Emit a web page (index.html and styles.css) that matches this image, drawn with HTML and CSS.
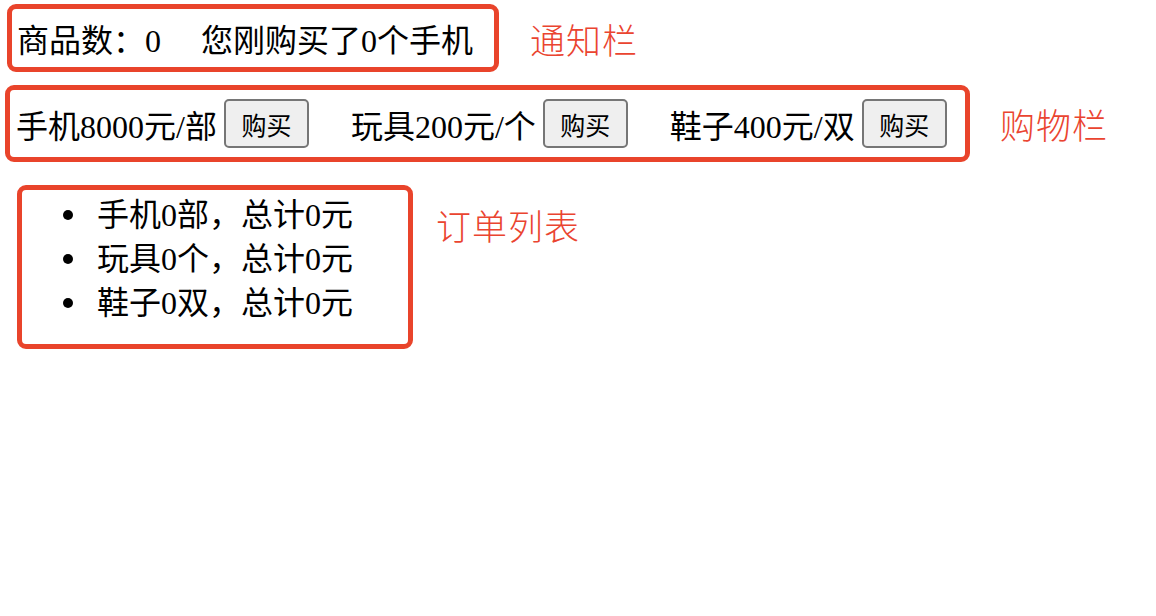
FILE: index.html
```html
<!DOCTYPE html>
<html lang="zh-CN">
<head>
  <meta charset="utf-8" />
  <meta name="viewport" content="width=device-width, initial-scale=1.0" />
  <title>购物车</title>
  <link rel="stylesheet" href="styles.css">
</head>

<body>
  <div class="row row-notice">
    <div class="frame notice">
      <span>商品数：0</span>
      <span class="notice-msg">您刚购买了0个手机</span>
    </div>
    <span class="tag">通知栏</span>
  </div>

  <div class="row row-shop">
    <div class="frame shop">
      <div class="item">
        <span>手机8000元/部</span>
        <button class="buy">购买</button>
      </div>
      <div class="item">
        <span>玩具200元/个</span>
        <button class="buy">购买</button>
      </div>
      <div class="item">
        <span>鞋子400元/双</span>
        <button class="buy">购买</button>
      </div>
    </div>
    <span class="tag">购物栏</span>
  </div>

  <div class="row row-orders">
    <div class="frame orders">
      <ul class="order-list">
        <li>手机0部，总计0元</li>
        <li>玩具0个，总计0元</li>
        <li>鞋子0双，总计0元</li>
      </ul>
    </div>
    <span class="tag">订单列表</span>
  </div>
</body>
</html>
```

FILE: styles.css
```css
body {
  margin: 0;
  font-family: "Liberation Serif", "Noto Sans CJK SC", serif;
  font-size: 32px;
  color: #000;
  background: #fff;
}

.row {
  display: flex;
  align-items: center;
}

.frame {
  box-sizing: border-box;
  border: 5px solid #e9442b;
  border-radius: 9px;
}

.tag {
  font-family: "Noto Sans CJK SC", sans-serif;
  font-size: 35px;
  font-weight: 300;
  color: #ea4430;
  letter-spacing: 1px;
}

/* notice bar */
.row-notice {
  padding: 4px 0 0 7px;
}

.notice {
  width: 492px;
  height: 68px;
  padding: 0 5px;
  display: flex;
  align-items: center;
  white-space: nowrap;
}

.notice-msg {
  margin-left: 40px;
}

.row-notice .tag {
  margin-left: 31px;
}

/* shop bar */
.row-shop {
  padding: 13px 0 0 5px;
}

.shop {
  width: 965px;
  height: 77px;
  padding: 0 6px;
  display: flex;
  align-items: center;
  gap: 42px;
  white-space: nowrap;
}

.item {
  display: flex;
  align-items: center;
  gap: 7px;
}

.buy {
  box-sizing: border-box;
  width: 85px;
  height: 49px;
  padding: 0;
  font-family: "Noto Sans CJK SC", sans-serif;
  font-size: 25px;
  color: #000;
  background: #efefef;
  border: 2px solid #767676;
  border-radius: 5px;
}

.row-shop .tag {
  margin-left: 30px;
}

/* order list */
.row-orders {
  padding: 23px 0 0 17px;
  align-items: flex-start;
}

.orders {
  width: 396px;
  height: 164px;
}

.order-list {
  margin: 0;
  padding: 3px 0 0 41px;
  line-height: 44px;
  list-style: none;
}

.order-list li::before {
  content: "";
  display: inline-block;
  width: 10px;
  height: 10px;
  margin-right: 24px;
  border-radius: 50%;
  background: #000;
  vertical-align: 6px;
}

.row-orders .tag {
  margin: 14px 0 0 23px;
}
```
